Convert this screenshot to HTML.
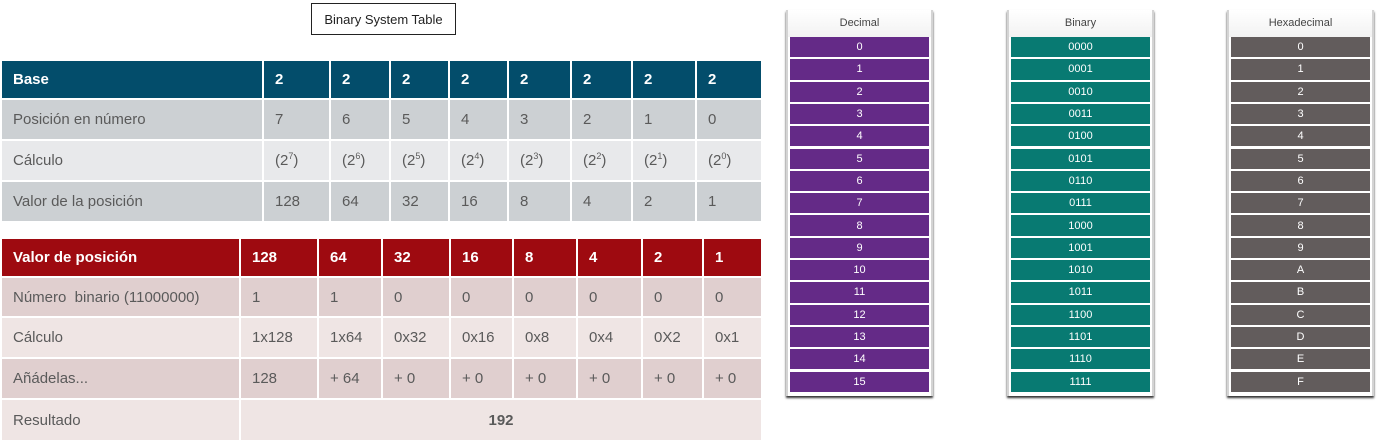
<!DOCTYPE html>
<html><head><meta charset="utf-8"><style>
body{margin:0;width:1384px;height:444px;background:#fff;position:relative;font-family:"Liberation Sans",sans-serif;overflow:hidden}
.c{position:absolute;box-sizing:border-box;padding-left:11px;font-size:15px;color:#5a5a5a;display:flex;align-items:center}
.h{color:#fff;font-weight:bold}
sup{font-size:9px;position:relative;top:-6px;vertical-align:baseline;line-height:0}
.title{position:absolute;left:311px;top:3px;width:145px;height:32px;box-sizing:border-box;border:1px solid #222;font-size:13px;display:flex;align-items:center;justify-content:center;color:#222}
.panel{position:absolute;top:10px;width:147px;height:386px;border-left:2px solid #d4d4d4;border-right:2px solid #d4d4d4;box-sizing:border-box;background:linear-gradient(#fff,#f2f2f2 27px,#fff 27px);box-shadow:0 2px 2px #333}
.ph{height:26px;display:flex;align-items:center;justify-content:center;font-size:11px;color:#444}
.cell{position:absolute;left:2px;right:2px;height:20.3px;color:#fff;font-size:11px;display:flex;align-items:center;justify-content:center}
</style></head><body>
<div class="title">Binary System Table</div>
<div id="t1"></div><div id="t2"></div>
<div class="panel" style="left:786px" id="p1"><div class="ph">Decimal</div></div>
<div class="panel" style="left:1007px" id="p2"><div class="ph">Binary</div></div>
<div class="panel" style="left:1227px" id="p3"><div class="ph">Hexadecimal</div></div>
<script>
function tbl(id,bx,rows,data,bgs){
 var h='';
 for(var r=0;r<rows.length-1;r++){
  var y=rows[r],hh=rows[r+1]-rows[r]-2;
  var cells=data[r];
  if(cells.length==2){
   h+='<div class="c" style="left:'+bx[0]+'px;top:'+y+'px;width:'+(bx[1]-bx[0]-2)+'px;height:'+hh+'px;background:'+bgs[r]+'"><span>'+cells[0]+'</span></div>';
   h+='<div class="c" style="left:'+bx[1]+'px;top:'+y+'px;width:'+(bx[bx.length-1]-bx[1])+'px;height:'+hh+'px;background:'+bgs[r]+';justify-content:center;font-weight:bold;padding:0"><span>'+cells[1]+'</span></div>';
   continue;
  }
  for(var i=0;i<cells.length;i++){
   var w=bx[i+1]-bx[i]-(i==cells.length-1?0:2);
   h+='<div class="c'+(r==0?' h':'')+'" style="left:'+bx[i]+'px;top:'+y+'px;width:'+w+'px;height:'+hh+'px;background:'+bgs[r]+'"><span>'+cells[i]+'</span></div>';
  }
 }
 document.getElementById(id).innerHTML=h;
}
var s=function(n){return '(2<sup>'+n+'</sup>)'};
tbl('t1',[2,264,331,391,450,509,572,633,697,761],[61,100,141,182,223],
[['Base','2','2','2','2','2','2','2','2'],
 ['Posición en número','7','6','5','4','3','2','1','0'],
 ['Cálculo',s(7),s(6),s(5),s(4),s(3),s(2),s(1),s(0)],
 ['Valor de la posición','128','64','32','16','8','4','2','1']],
['#034d6b','#ccd0d3','#e8e9eb','#ccd0d3']);
tbl('t2',[2,241,319,383,451,514,578,643,704,761],[239,278,318,359,400,442],
[['Valor de posición','128','64','32','16','8','4','2','1'],
 ['Número&nbsp; binario (11000000)','1','1','0','0','0','0','0','0'],
 ['Cálculo','1x128','1x64','0x32','0x16','0x8','0x4','0X2','0x1'],
 ['Añádelas...','128','+ 64','+ 0','+ 0','+ 0','+ 0','+ 0','+ 0'],
 ['Resultado','192']],
['#9e0a10','#e0cfcf','#efe5e4','#e0cfcf','#efe5e4']);
var hex='0123456789ABCDEF';
[['p1','#642a87'],['p2','#087a72'],['p3','#625c5c']].forEach(function(p,k){
 var h='';
 for(var i=0;i<16;i++){
  var t=k==0?i:k==1?i.toString(2).padStart(4,'0'):hex[i];
  h+='<div class="cell" style="top:'+(27+i*22.3)+'px;background:'+p[1]+'">'+t+'</div>';
 }
 document.getElementById(p[0]).innerHTML+=h;
});
</script>
</body></html>
